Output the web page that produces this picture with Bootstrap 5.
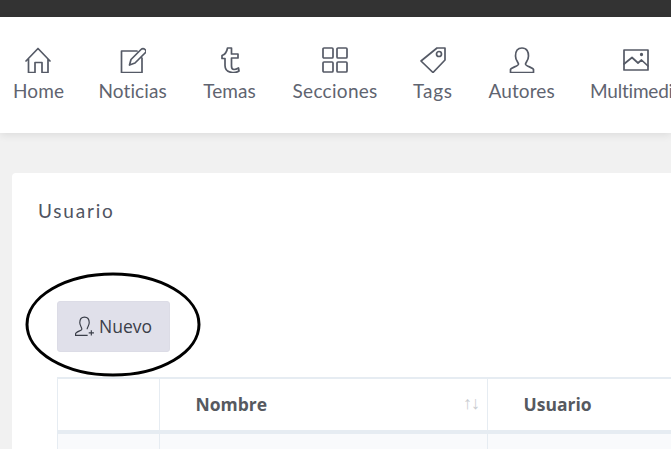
<!DOCTYPE html>
<html lang="en">
  <head>
    <meta charset="UTF-8" />
    <meta name="viewport" content="width=device-width, initial-scale=1.0" />
    <title>Usuarios</title>
    <link
      rel="stylesheet"
      href="https://cdn.jsdelivr.net/npm/bootstrap@5.3.0/dist/css/bootstrap.min.css"
    />
    <style>
      html, body { height: 100%; overflow: hidden; }
      body { background: #f1f1f1; font-family: "Lato", "Open Sans", sans-serif; font-variant-ligatures: none; color: #5f6470; }
      .top-strip { height: 17px; background: #333333; }
      .main-menu { height: 116px; background: #fff; box-shadow: 0 2px 8px rgba(0, 0, 0, .09); padding: 30px 0 0 13px; gap: 35.5px; white-space: nowrap; position: relative; }
      .menu-item { color: #5f6470; font-size: 19px; line-height: 24px; letter-spacing: .1px; text-decoration: none; text-align: center; flex: none; }
      .menu-item:nth-child(1) { width: 50px; }
      .menu-item:nth-child(2) { width: 68px; }
      .menu-item:nth-child(3) { width: 55px; }
      .menu-item:nth-child(4) { width: 85px; letter-spacing: .3px; }
      .menu-item:nth-child(5) { width: 40px; letter-spacing: .8px; }
      .menu-item:nth-child(6) { width: 66px; }
      .menu-item:nth-child(7) { letter-spacing: -.2px; }
      .menu-item svg { display: block; width: 26px; height: 26px; margin: 0 auto 6px; fill: none; stroke: #555a66; stroke-width: 1.7; stroke-linejoin: round; stroke-linecap: round; }
      .page-wrap { padding: 40px 0 0 12px; }
      .user-panel { background: #fff; border-radius: 4px 0 0 0; height: 276px; width: 659px; padding: 26px 0 0 26px; overflow: hidden; }
      .panel-title { font-size: 19px; line-height: 24px; letter-spacing: 1.8px; color: #4f5461; margin: 0; }
      .panel-body { padding: 78px 0 0 19px; position: relative; }
      .btn-new { width: 113px; height: 51px; background: #e0e0ea; border: 1px solid #dcdce6; border-radius: 3px; font-family: "Open Sans", sans-serif; font-size: 17.5px; color: #3a3e49; padding: 0 0 0 1px; }
      .btn-new svg { width: 21px; height: 21px; margin: -1px 0 0 -2px; fill: none; stroke: #3a3e49; stroke-width: 1.1; }
      .user-table { margin-top: 25px; width: 800px; table-layout: fixed; border-collapse: collapse; font-family: "Open Sans", sans-serif; }
      .user-table th, .user-table td { border-style: solid; border-color: #e6ecf2; border-width: 2px 1px; }
      .user-table th { height: 54px; border-bottom-width: 4px; font-size: 17.5px; font-weight: 700; color: #56595f; padding: 0 0 0 35.5px; position: relative; }
      .user-table td { height: 40px; background: #f9fafc; }
      .sort-arrows { position: absolute; right: 8px; top: 14px; font-size: 18px; font-weight: 400; color: #c9ccd0; letter-spacing: -1px; line-height: 1; }
      .hand-circle { position: absolute; left: -13px; top: 49px; width: 176px; height: 105px; fill: none; stroke: #000; stroke-width: 3; pointer-events: none; }
    </style>
  </head>
  <body>
    <div class="top-strip"></div>
    <nav class="main-menu d-flex">
      <a class="menu-item" href="#">
        <svg viewBox="0 0 26 26"><path d="M1 14 13 1.500 25 14M3.500 12V25.500H10V15.500H17V25.500H23V12" /></svg>
        Home
      </a>
      <a class="menu-item" href="#">
        <svg viewBox="0 0 26 26"><path d="M17 4H1.500V25.500H22V11M9.500 18 11 12.500 21 2.500Q23 .5 25 2.500T25 6L15 16Z" /></svg>
        Noticias
      </a>
      <a class="menu-item" href="#">
        <svg viewBox="0 0 26 26"><path d="M10.500 1H14.500V7H21V11H14.500V19Q14.500 22.500 17 22.500 19 22.500 21.500 21L22 24Q19 26 15.500 25.500 8 25 8 18.500V11.500H5V8.500Q9.500 7 10.500 1Z" /></svg>
        Temas
      </a>
      <a class="menu-item" href="#">
        <svg viewBox="0 0 26 26"><rect x="1" y="1" width="10" height="10" rx="1" /><rect x="15" y="1" width="10" height="10" rx="1" /><rect x="1" y="15" width="10" height="10" rx="1" /><rect x="15" y="15" width="10" height="10" rx="1" /></svg>
        Secciones
      </a>
      <a class="menu-item" href="#">
        <svg viewBox="0 0 26 26"><path d="M1 14 17 1H25V13L13 25.500Z" /><circle cx="19" cy="7" r="2.500" /></svg>
        Tags
      </a>
      <a class="menu-item" href="#">
        <svg viewBox="0 0 26 26"><path d="M13 1C8 1 6.500 5 6.500 9 6.500 13 9 15 9.500 17 10 19 2 20.500 1.500 22.500V25.500H24.500V22.500C24 20.500 16 19 16.500 17 17 15 19.500 13 19.500 9 19.500 5 18 1 13 1Z" /></svg>
        Autores
      </a>
      <a class="menu-item" href="#">
        <svg viewBox="0 0 26 26"><rect x="1" y="3" width="24" height="20" /><path d="M1 17 9 10.500 15 16 18.500 13 25 19" /><circle cx="18.500" cy="7.500" r=".8" /></svg>
        Multimedia
      </a>
    </nav>
    <div class="page-wrap">
      <div class="user-panel">
        <h1 class="panel-title fw-normal">Usuario</h1>
        <div class="panel-body">
          <button type="button" class="btn btn-new d-flex align-items-center justify-content-center gap-1">
            <svg viewBox="0 0 20 20"><path d="M10 1C7 1 5.500 3.500 5.500 6.500 5.500 9 7.500 11 7.500 12.500 7.500 14 1.500 15 1.500 17V18.500H13M10 1C13 1 14.500 3.500 14.500 6.500 14.500 9 12.500 11 12.500 12.500M14 16H19M16.500 13.500V18.500" /></svg>
            Nuevo
          </button>
          <table class="user-table">
            <colgroup><col style="width: 102px" /><col style="width: 328px" /><col /></colgroup>
            <thead>
              <tr>
                <th></th>
                <th>Nombre<span class="sort-arrows">↑↓</span></th>
                <th>Usuario</th>
              </tr>
            </thead>
            <tbody>
              <tr><td></td><td></td><td></td></tr>
            </tbody>
          </table>
          <svg class="hand-circle" viewBox="0 0 176 105"><ellipse cx="88" cy="52.500" rx="86" ry="50.500" /></svg>
        </div>
      </div>
    </div>
    <script src="https://cdn.jsdelivr.net/npm/bootstrap@5.3.0/dist/js/bootstrap.bundle.min.js"></script>
  </body>
</html>
